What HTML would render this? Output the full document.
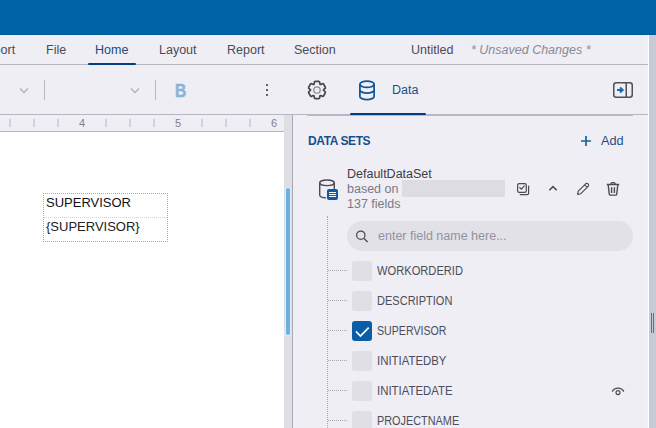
<!DOCTYPE html>
<html><head><meta charset="utf-8">
<style>
*{margin:0;padding:0;box-sizing:border-box}
html,body{width:656px;height:428px;overflow:hidden;background:#efeef4;font-family:"Liberation Sans",sans-serif}
.a{position:absolute}
.t{position:absolute;line-height:1;white-space:nowrap}
</style></head><body>
<!-- right scrollbar -->
<div class="a" style="left:645px;top:35px;width:3px;height:393px;background:#f1f0f6"></div><div class="a" style="left:648px;top:35px;width:1px;height:393px;background:#fff"></div>
<div class="a" style="left:649px;top:35px;width:7px;height:393px;background:#c8cbd5"></div>
<div class="a" style="left:651px;top:313px;width:1px;height:20px;background:#6a6a78"></div>
<div class="a" style="left:653px;top:313px;width:1px;height:20px;background:#6a6a78"></div>

<!-- top blue bar -->
<div class="a" style="left:0;top:0;width:656px;height:35px;background:#0063a8"></div>
<div class="a" style="left:0;top:34px;width:656px;height:1px;background:#005a9c"></div>
<!-- tab bar -->
<div class="a" style="left:0;top:64px;width:648px;height:1px;background:#b6b6c2"></div>
<div class="t" style="left:-21px;top:44px;font-size:12.5px;color:#4a4a58">Export</div>
<div class="t" style="left:46px;top:44px;font-size:12.5px;color:#4a4a58">File</div>
<div class="t" style="left:95px;top:44px;font-size:12.5px;color:#1a4a85">Home</div>
<div class="a" style="left:88px;top:63px;width:48px;height:2px;background:#003f80;border-radius:1px"></div>
<div class="t" style="left:159px;top:44px;font-size:12.5px;color:#4a4a58">Layout</div>
<div class="t" style="left:227px;top:44px;font-size:12.5px;color:#4a4a58">Report</div>
<div class="t" style="left:294px;top:44px;font-size:12.5px;color:#4a4a58">Section</div>
<div class="t" style="left:411px;top:44px;font-size:12.5px;color:#4a4a58">Untitled</div>
<div class="t" style="left:471px;top:44px;font-size:12.5px;color:#8a8a96;font-style:italic">* Unsaved Changes *</div>
<!-- toolbar -->
<div class="a" style="left:0;top:114px;width:648px;height:1px;background:#b6b6c2"></div>
<svg class="a" style="left:19px;top:87px" width="10" height="7"><path d="M1 1.5 L5 5.5 L9 1.5" fill="none" stroke="#b0b0bc" stroke-width="1.3"/></svg>
<div class="a" style="left:44px;top:80px;width:1px;height:20px;background:#b8b8c4"></div>
<svg class="a" style="left:130px;top:87px" width="10" height="7"><path d="M1 1.5 L5 5.5 L9 1.5" fill="none" stroke="#b0b0bc" stroke-width="1.3"/></svg>
<div class="a" style="left:155px;top:80px;width:1px;height:20px;background:#b8b8c4"></div>
<div class="t" style="left:175px;top:81px;font-size:19px;font-weight:bold;color:#8ab3d6;-webkit-text-stroke:0.5px #8ab3d6;transform:scaleX(0.82);transform-origin:0 0">B</div>
<div class="a" style="left:266px;top:84px;width:2px;height:2px;background:#333;border-radius:1px"></div>
<div class="a" style="left:266px;top:89px;width:2px;height:2px;background:#333;border-radius:1px"></div>
<div class="a" style="left:266px;top:94px;width:2px;height:2px;background:#333;border-radius:1px"></div>
<!-- ruler -->
<div class="a" style="left:0;top:131px;width:284px;height:1px;background:#b6b6c2"></div>
<div class="a" style="left:9px;top:119px;width:2px;height:8px;background:#d3d3db"></div>
<div class="a" style="left:33px;top:119px;width:2px;height:8px;background:#d3d3db"></div>
<div class="a" style="left:57px;top:119px;width:2px;height:8px;background:#d3d3db"></div>
<div class="t" style="left:79px;top:118px;font-size:11px;color:#7e7e90">4</div>
<div class="a" style="left:105px;top:119px;width:2px;height:8px;background:#d3d3db"></div>
<div class="a" style="left:129px;top:119px;width:2px;height:8px;background:#d3d3db"></div>
<div class="a" style="left:153px;top:119px;width:2px;height:8px;background:#d3d3db"></div>
<div class="t" style="left:175px;top:118px;font-size:11px;color:#7e7e90">5</div>
<div class="a" style="left:201px;top:119px;width:2px;height:8px;background:#d3d3db"></div>
<div class="a" style="left:225px;top:119px;width:2px;height:8px;background:#d3d3db"></div>
<div class="a" style="left:249px;top:119px;width:2px;height:8px;background:#d3d3db"></div>
<div class="t" style="left:271px;top:118px;font-size:11px;color:#7e7e90">6</div>

<!-- canvas -->
<div class="a" style="left:0;top:132px;width:284px;height:296px;background:#fff"></div>
<div class="a" style="left:284px;top:115px;width:8px;height:313px;background:#dedee6"></div>
<div class="a" style="left:285px;top:187px;width:6px;height:149px;background:#e9e8f0;border-radius:3px"></div><div class="a" style="left:286px;top:188px;width:4px;height:147px;background:#6cb1e3;border-radius:2px"></div>
<div class="a" style="left:292px;top:115px;width:1px;height:313px;background:#a9a9b5"></div>
<div class="a" style="left:43px;top:193px;width:125px;height:49px;border:1px dotted #ababab"></div>
<div class="a" style="left:44px;top:217px;width:123px;height:0;border-top:1px dotted #d2d2d2"></div>
<div class="t" style="left:46px;top:196px;font-size:13px;color:#111">SUPERVISOR</div>
<div class="t" style="left:46px;top:220px;font-size:13px;color:#222">{SUPERVISOR}</div>
<!-- right panel toolbar -->
<svg class="a" style="left:305px;top:78px" width="24" height="24" viewBox="-12 -12 24 24"><path d="M-3.20 -5.53 Q-2.91 -5.70 -2.81 -6.70 L-2.73 -7.61 Q-2.63 -8.61 -1.63 -8.61 L1.63 -8.61 Q2.63 -8.61 2.73 -7.61 L2.81 -6.70 Q2.91 -5.70 3.20 -5.53 L3.20 -5.53 Q3.49 -5.37 4.39 -5.78 L5.23 -6.17 Q6.14 -6.58 6.64 -5.72 L8.27 -2.89 Q8.77 -2.02 7.95 -1.45 L7.21 -0.91 Q6.39 -0.33 6.39 0.00 L6.39 0.00 Q6.39 0.33 7.21 0.91 L7.95 1.45 Q8.77 2.02 8.27 2.89 L6.64 5.72 Q6.14 6.58 5.23 6.17 L4.39 5.78 Q3.49 5.37 3.20 5.53 L3.20 5.53 Q2.91 5.70 2.81 6.70 L2.73 7.61 Q2.63 8.61 1.63 8.61 L-1.63 8.61 Q-2.63 8.61 -2.73 7.61 L-2.81 6.70 Q-2.91 5.70 -3.20 5.53 L-3.20 5.53 Q-3.49 5.37 -4.39 5.78 L-5.23 6.17 Q-6.14 6.58 -6.64 5.72 L-8.27 2.89 Q-8.77 2.02 -7.95 1.45 L-7.21 0.91 Q-6.39 0.33 -6.39 0.00 L-6.39 0.00 Q-6.39 -0.33 -7.21 -0.91 L-7.95 -1.45 Q-8.77 -2.02 -8.27 -2.89 L-6.64 -5.72 Q-6.14 -6.58 -5.23 -6.17 L-4.39 -5.78 Q-3.49 -5.37 -3.20 -5.53 Z" fill="none" stroke="#45454f" stroke-width="1.7" stroke-linejoin="round"/><circle cx="0" cy="0" r="3.2" fill="none" stroke="#8a8a92" stroke-width="1.3"/></svg>
<svg class="a" style="left:356px;top:78px" width="22" height="24" viewBox="356 78 22 24"><path d="M359.9 84.2 L359.9 96.4 A7.1 3.1 0 0 0 374.1 96.4 L374.1 84.2" fill="none" stroke="#0f5597" stroke-width="1.75"/><ellipse cx="367" cy="84.2" rx="7.1" ry="3.2" fill="none" stroke="#0f5597" stroke-width="1.75"/><path d="M359.9 89.9 A7.1 3.1 0 0 0 374.1 89.9" fill="none" stroke="#0f5597" stroke-width="1.75"/></svg>
<div class="t" style="left:392px;top:84px;font-size:12.5px;color:#1c4f86">Data</div>
<div class="a" style="left:307px;top:114px;width:326px;height:2px;background:#b8b8c2"></div>
<div class="a" style="left:350px;top:113px;width:76px;height:2px;background:#003f80;border-radius:1px"></div>
<svg class="a" style="left:610px;top:80px" width="26" height="20" viewBox="610 80 26 20"><rect x="613.75" y="82.75" width="18.5" height="14.5" rx="2.5" fill="none" stroke="#505058" stroke-width="1.5"/><line x1="626.25" y1="83" x2="626.25" y2="97" stroke="#505058" stroke-width="1.5"/><path d="M617 90 L622 90 M620 87.5 L622.8 90 L620 92.5" fill="none" stroke="#1a6cb0" stroke-width="1.9" stroke-linejoin="miter"/></svg>
<!-- data sets header -->
<div class="t" style="left:308px;top:135px;font-size:12px;font-weight:bold;color:#15508a;letter-spacing:-0.4px">DATA SETS</div>
<svg class="a" style="left:580px;top:135px" width="12" height="12"><path d="M6 1 V11 M1 6 H11" stroke="#1f5f94" stroke-width="1.7"/></svg>
<div class="t" style="left:601px;top:135px;font-size:12.7px;color:#1c4f86">Add</div>
<!-- dataset item -->
<svg class="a" style="left:316px;top:176px" width="24" height="26" viewBox="316 176 24 26"><path d="M319.7 182.8 L319.7 195.3 A7.3 2.7 0 0 0 326 197.9" fill="none" stroke="#4a4a55" stroke-width="1.4"/><ellipse cx="327" cy="182.8" rx="7.3" ry="2.8" fill="none" stroke="#4a4a55" stroke-width="1.4"/><path d="M334.3 182.8 L334.3 189" fill="none" stroke="#4a4a55" stroke-width="1.4"/><rect x="327" y="189" width="11" height="11" rx="2" fill="#0c5ca5"/><path d="M329 192.5 H336 M329 194.5 H336 M329 196.5 H336" stroke="#fff" stroke-width="1"/></svg>
<div class="t" style="left:347px;top:168px;font-size:12.5px;color:#3d3d4a">DefaultDataSet</div>
<div class="t" style="left:347px;top:183px;font-size:12.5px;color:#7a7a88">based on</div>
<div class="t" style="left:347px;top:198px;font-size:12.5px;color:#7a7a88">137 fields</div>
<div class="a" style="left:402px;top:180px;width:103px;height:17px;background:#dddce3"></div>
<svg class="a" style="left:514px;top:180px" width="18" height="18" viewBox="514 180 18 18"><rect x="517.6" y="183.6" width="8.7" height="8.7" rx="1.6" fill="none" stroke="#4a4a55" stroke-width="1.2"/><path d="M528.6 185.8 V193.2 A1.4 1.4 0 0 1 527.2 194.6 H519.8" fill="none" stroke="#4a4a55" stroke-width="1.2"/><path d="M519.4 187.3 L521.4 189.2 L524.6 185.6" fill="none" stroke="#4a4a55" stroke-width="1.2"/></svg>
<svg class="a" style="left:546px;top:183px" width="14" height="10" viewBox="546 183 14 10"><path d="M549.3 190.3 L553 186.6 L556.7 190.3" fill="none" stroke="#4a4a55" stroke-width="1.5"/></svg>
<svg class="a" style="left:574px;top:180px" width="18" height="18" viewBox="574 180 18 18"><path d="M577.6 194.4 L578.3 191.2 L585.9 183.6 A1.85 1.85 0 0 1 588.4 186.1 L580.8 193.7 Z M584.7 184.9 L587.1 187.3" fill="none" stroke="#4a4a55" stroke-width="1.15" stroke-linejoin="round"/></svg>
<svg class="a" style="left:604px;top:180px" width="18" height="18" viewBox="604 180 18 18"><path d="M606.8 184.5 H619.2 M611 184.5 V183.8 A1.2 1.2 0 0 1 612.2 182.6 H613.8 A1.2 1.2 0 0 1 615 183.8 V184.5 M608.2 185 L609.3 194.2 A1 1 0 0 0 610.3 195.1 H615.7 A1 1 0 0 0 616.7 194.2 L617.8 185 M611.6 187.3 V193 M614.4 187.3 V193" fill="none" stroke="#4a4a55" stroke-width="1.4"/></svg>
<!-- tree line -->
<div class="a" style="left:327px;top:216px;width:0;height:212px;border-left:1px dotted #a8a8b2"></div>
<!-- search -->
<div class="a" style="left:347px;top:221px;width:286px;height:30px;border-radius:15px;background:#e2e1e8"></div>
<svg class="a" style="left:353px;top:228px" width="18" height="18" viewBox="353 228 18 18"><circle cx="360.8" cy="235.2" r="4.2" fill="none" stroke="#4a4a55" stroke-width="1.25"/><path d="M363.8 238.2 L367.6 242" stroke="#4a4a55" stroke-width="1.3"/></svg>
<div class="t" style="left:378px;top:230px;font-size:12.5px;color:#92929e">enter field name here...</div>
<div class="a" style="left:328px;top:270px;width:19px;height:0;border-top:1px dotted #a8a8b2"></div>
<div class="a" style="left:352px;top:261px;width:20px;height:20px;border-radius:3px;background:#e0dfe6"></div>
<div class="t" style="left:377px;top:265px;font-size:12.5px;color:#4c4c5a;transform:scaleX(0.891);transform-origin:0 0">WORKORDERID</div>
<div class="a" style="left:328px;top:300px;width:19px;height:0;border-top:1px dotted #a8a8b2"></div>
<div class="a" style="left:352px;top:291px;width:20px;height:20px;border-radius:3px;background:#e0dfe6"></div>
<div class="t" style="left:377px;top:295px;font-size:12.5px;color:#4c4c5a;transform:scaleX(0.882);transform-origin:0 0">DESCRIPTION</div>
<div class="a" style="left:328px;top:330px;width:19px;height:0;border-top:1px dotted #a8a8b2"></div>
<div class="a" style="left:352px;top:321px;width:20px;height:20px;border-radius:3px;background:#0a5ea8"></div>
<svg class="a" style="left:352px;top:321px" width="20" height="20"><path d="M4 10.3 L8.4 15 L16.7 6.6" fill="none" stroke="#fff" stroke-width="1.7"/></svg>
<div class="t" style="left:377px;top:325px;font-size:12.5px;color:#4c4c5a;transform:scaleX(0.850);transform-origin:0 0">SUPERVISOR</div>
<div class="a" style="left:328px;top:360px;width:19px;height:0;border-top:1px dotted #a8a8b2"></div>
<div class="a" style="left:352px;top:351px;width:20px;height:20px;border-radius:3px;background:#e0dfe6"></div>
<div class="t" style="left:377px;top:355px;font-size:12.5px;color:#4c4c5a;transform:scaleX(0.912);transform-origin:0 0">INITIATEDBY</div>
<div class="a" style="left:328px;top:390px;width:19px;height:0;border-top:1px dotted #a8a8b2"></div>
<div class="a" style="left:352px;top:381px;width:20px;height:20px;border-radius:3px;background:#e0dfe6"></div>
<div class="t" style="left:377px;top:385px;font-size:12.5px;color:#4c4c5a;transform:scaleX(0.911);transform-origin:0 0">INITIATEDATE</div>
<div class="a" style="left:328px;top:420px;width:19px;height:0;border-top:1px dotted #a8a8b2"></div>
<div class="a" style="left:352px;top:411px;width:20px;height:20px;border-radius:3px;background:#e0dfe6"></div>
<div class="t" style="left:377px;top:415px;font-size:12.5px;color:#4c4c5a;transform:scaleX(0.870);transform-origin:0 0">PROJECTNAME</div>
<svg class="a" style="left:609px;top:384px" width="18" height="14" viewBox="609 384 18 14"><path d="M612.2 391.6 A6.6 6.6 0 0 1 623.8 391.6" fill="none" stroke="#4a4a55" stroke-width="1.25"/><circle cx="618" cy="392.6" r="2" fill="none" stroke="#4a4a55" stroke-width="1.15"/></svg>
</body></html>
